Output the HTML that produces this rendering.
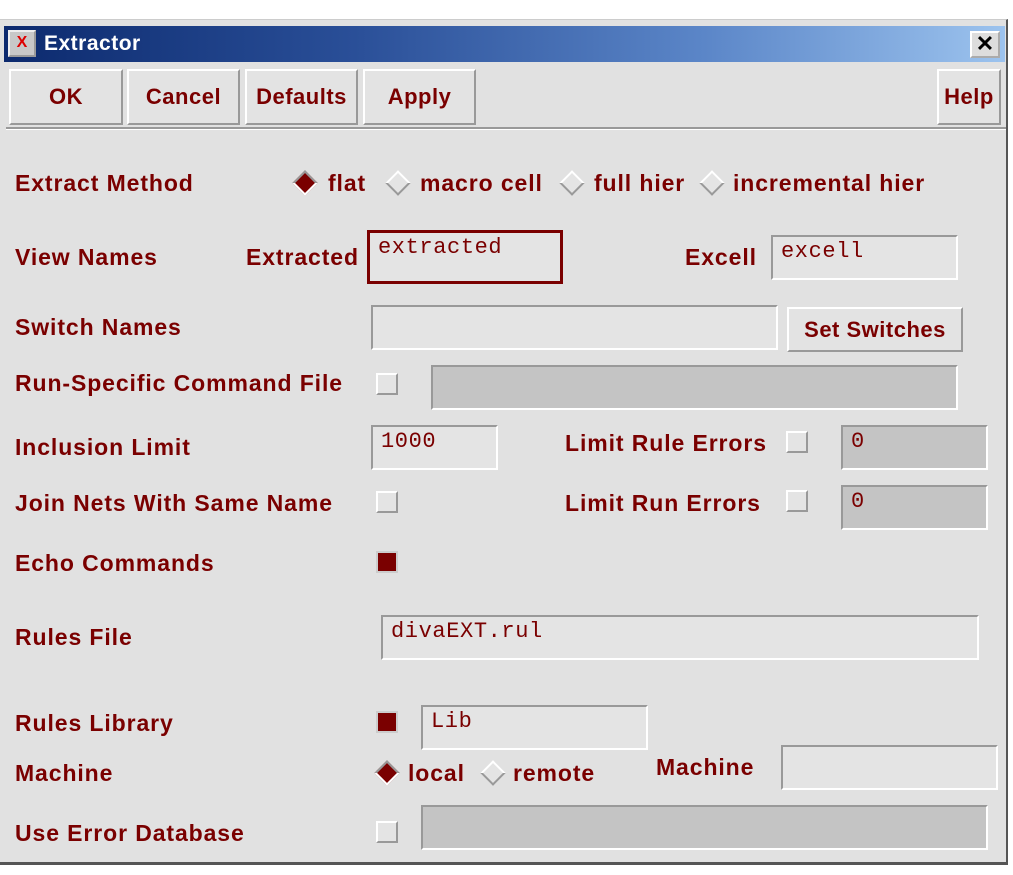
<!DOCTYPE html>
<html><head><style>
body{margin:0;width:1013px;height:875px;background:#fff;position:relative;overflow:hidden;font-family:"Liberation Sans",sans-serif}
.win{position:absolute;left:0;top:19px;width:1008px;height:846px;background:#e1e1e1;border-right:2px solid #555;border-bottom:3px solid #555;border-top:1px solid #ccc;box-sizing:border-box}
.tb{position:absolute;left:4px;top:26px;width:1001px;height:36px;background:linear-gradient(90deg,#0c2a6e 0%,#2a4f98 35%,#5b86c8 70%,#9cc3ee 100%)}
.tb span{position:absolute;left:40px;top:6px;color:#fff;font-weight:bold;font-size:21px;letter-spacing:0.5px}
.ico{position:absolute;left:8px;top:30px;width:28px;height:27px;background:#c8c8c8;border:2px outset #eee;box-sizing:border-box;color:#d00;font-weight:bold;font-size:16px;text-align:center;line-height:22px}
.close{position:absolute;left:970px;top:31px;width:30px;height:27px;background:#ddd;border:2px outset #fff;box-sizing:border-box;font-size:22px;font-weight:bold;text-align:center;line-height:22px}
.btn{position:absolute;top:69px;height:56px;background:#e3e3e3;border:2px solid;border-color:#fff #999 #999 #fff;box-sizing:border-box;color:#7a0000;font-weight:bold;font-size:22px;letter-spacing:0.5px;text-align:center;line-height:52px}
.sep{position:absolute;left:6px;top:127px;width:1000px;height:2px;background:#999;border-bottom:1px solid #fff}
.l{position:absolute;color:#7a0000;font-weight:bold;font-size:23px;line-height:24px;white-space:nowrap;letter-spacing:0.9px}
.f{position:absolute;border:2px solid;border-color:#999 #fff #fff #999;box-sizing:border-box;background:#e4e4e4;font-family:"Liberation Mono",monospace;color:#7a0000;font-size:22px;letter-spacing:0.6px;padding:2px 8px}
.g{background:#c4c4c4}
.cb{position:absolute;width:22px;height:22px;border:2px solid;border-color:#fff #999 #999 #fff;box-sizing:border-box;background:#e4e4e4}
.cb.on{background:#7a0000;border-color:#ccc #ccc #ccc #ccc}
.d{position:absolute;width:18px;height:18px;transform:rotate(45deg);border:2px solid;border-color:#fff #999 #999 #fff;box-sizing:border-box;background:#e4e4e4}
.d.on{background:#7a0000;border-color:#999 #fff #fff #999}
</style></head><body>
<div class="win"></div>
<div class="tb"><span>Extractor</span></div>
<div class="ico">X</div>
<div class="close">✕</div>
<div class="btn" style="left:9px;width:114px">OK</div>
<div class="btn" style="left:127px;width:113px">Cancel</div>
<div class="btn" style="left:245px;width:113px">Defaults</div>
<div class="btn" style="left:363px;width:113px">Apply</div>
<div class="btn" style="left:937px;width:64px">Help</div>
<div class="sep"></div>

<div class="l" style="left:15px;top:171px">Extract Method</div>
<div class="d on" style="left:296px;top:174px"></div><div class="l" style="left:328px;top:171px">flat</div>
<div class="d" style="left:389px;top:174px"></div><div class="l" style="left:420px;top:171px">macro cell</div>
<div class="d" style="left:563px;top:174px"></div><div class="l" style="left:594px;top:171px">full hier</div>
<div class="d" style="left:703px;top:174px"></div><div class="l" style="left:733px;top:171px">incremental hier</div>

<div class="l" style="left:15px;top:245px">View Names</div>
<div class="l" style="left:246px;top:245px">Extracted</div>
<div class="f" style="left:367px;top:230px;width:196px;height:54px;border:3px solid #7a0000">extracted</div>
<div class="l" style="left:685px;top:245px">Excell</div>
<div class="f" style="left:771px;top:235px;width:187px;height:45px">excell</div>

<div class="l" style="left:15px;top:315px">Switch Names</div>
<div class="f" style="left:371px;top:305px;width:407px;height:45px"></div>
<div class="btn" style="left:787px;top:307px;width:176px;height:45px;line-height:41px">Set Switches</div>

<div class="l" style="left:15px;top:371px">Run-Specific Command File</div>
<div class="cb" style="left:376px;top:373px"></div>
<div class="f g" style="left:431px;top:365px;width:527px;height:45px"></div>

<div class="l" style="left:15px;top:435px">Inclusion Limit</div>
<div class="f" style="left:371px;top:425px;width:127px;height:45px">1000</div>
<div class="l" style="left:565px;top:431px">Limit Rule Errors</div>
<div class="cb" style="left:786px;top:431px"></div>
<div class="f g" style="left:841px;top:425px;width:147px;height:45px">0</div>

<div class="l" style="left:15px;top:491px">Join Nets With Same Name</div>
<div class="cb" style="left:376px;top:491px"></div>
<div class="l" style="left:565px;top:491px">Limit Run Errors</div>
<div class="cb" style="left:786px;top:490px"></div>
<div class="f g" style="left:841px;top:485px;width:147px;height:45px">0</div>

<div class="l" style="left:15px;top:551px">Echo Commands</div>
<div class="cb on" style="left:376px;top:551px"></div>

<div class="l" style="left:15px;top:625px">Rules File</div>
<div class="f" style="left:381px;top:615px;width:598px;height:45px">divaEXT.rul</div>

<div class="l" style="left:15px;top:711px">Rules Library</div>
<div class="cb on" style="left:376px;top:711px"></div>
<div class="f" style="left:421px;top:705px;width:227px;height:45px">Lib</div>

<div class="l" style="left:15px;top:761px">Machine</div>
<div class="d on" style="left:378px;top:764px"></div><div class="l" style="left:408px;top:761px">local</div>
<div class="d" style="left:484px;top:764px"></div><div class="l" style="left:513px;top:761px">remote</div>
<div class="l" style="left:656px;top:755px">Machine</div>
<div class="f" style="left:781px;top:745px;width:217px;height:45px"></div>

<div class="l" style="left:15px;top:821px">Use Error Database</div>
<div class="cb" style="left:376px;top:821px"></div>
<div class="f g" style="left:421px;top:805px;width:567px;height:45px"></div>
</body></html>
